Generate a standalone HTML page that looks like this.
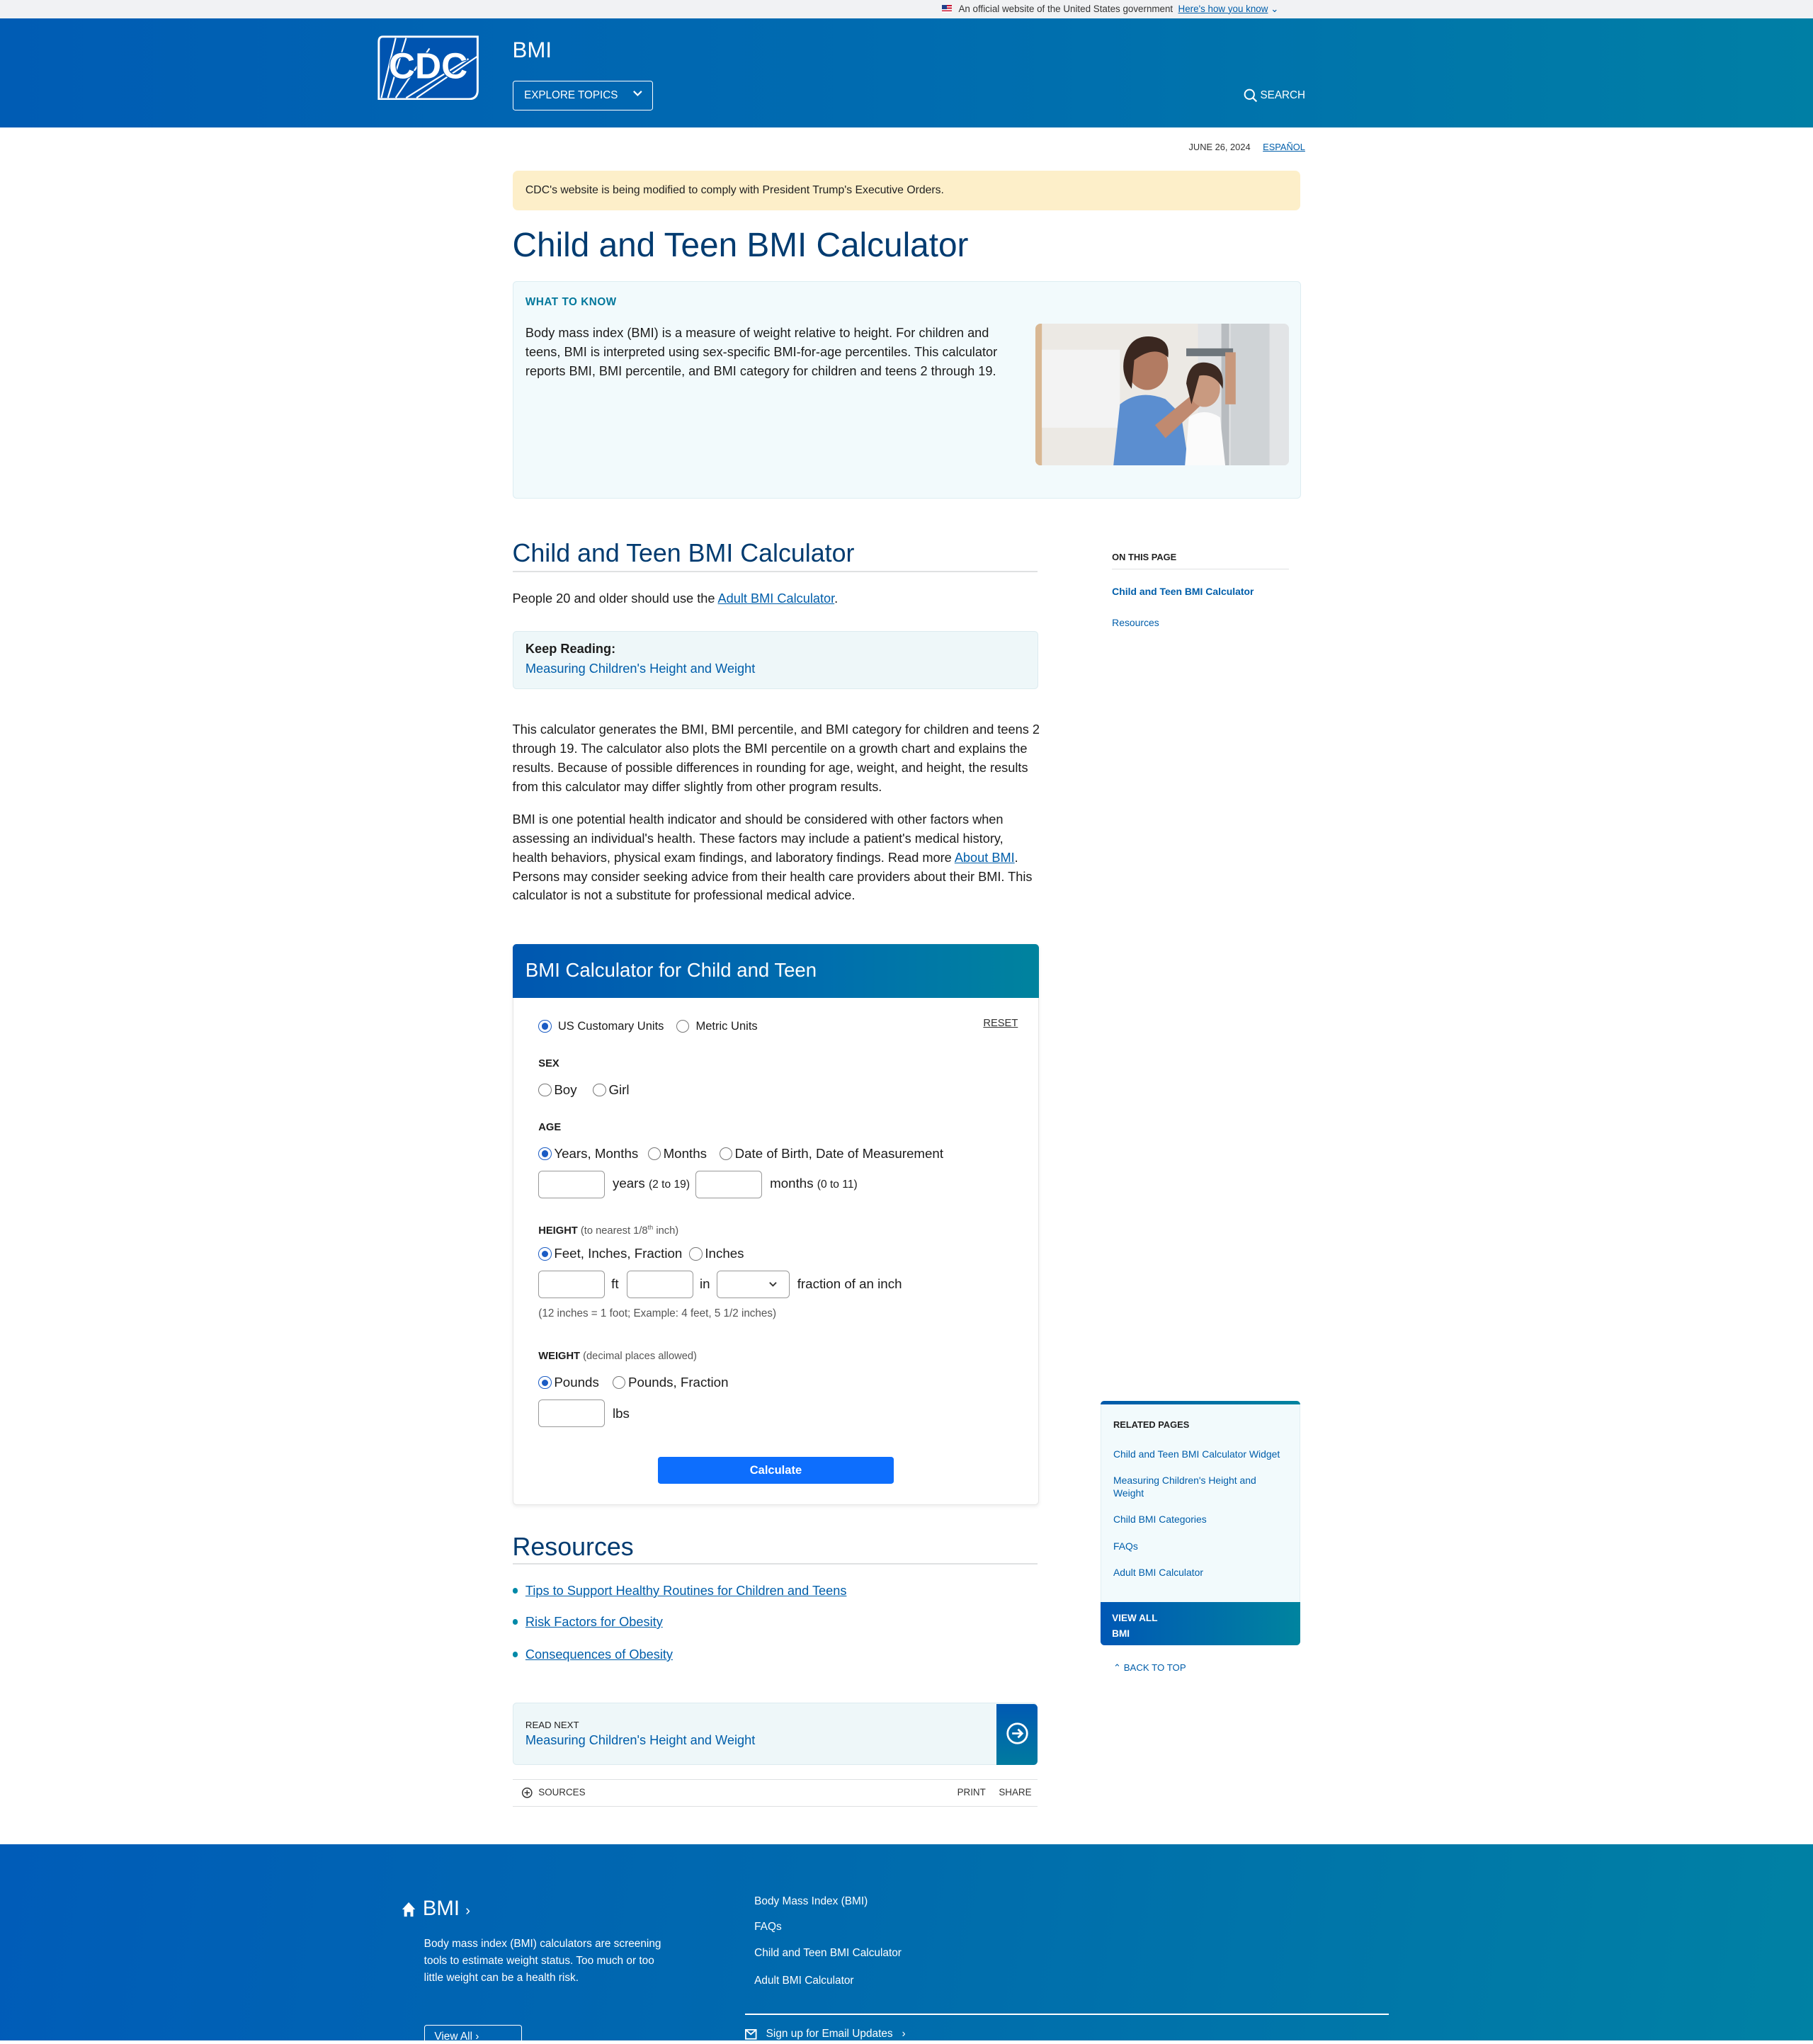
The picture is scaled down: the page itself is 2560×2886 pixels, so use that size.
<!DOCTYPE html>
<html><head><meta charset="utf-8">
<style>
html,body{margin:0;padding:0;background:#fff;}
body{width:1394px;height:1568px;zoom:1.83644;position:relative;overflow:hidden;font-family:"Liberation Sans",sans-serif;color:#1c1c1c;}
.a{position:absolute;}
.t{position:absolute;white-space:nowrap;}
a,.lk{color:#005eaa;}
.u{text-decoration:underline;}
.h{font-family:"Liberation Sans",sans-serif;color:#003b70;}
.radio{position:absolute;width:9px;height:9px;border:1px solid #777;border-radius:50%;background:#fff;}
.radio.on{border-color:#1b5cc4;}
.radio.on:after{content:"";position:absolute;left:2px;top:2px;width:5px;height:5px;border-radius:50%;background:#1b5cc4;}
.inp{position:absolute;border:1px solid #999;border-radius:3px;background:#fff;height:20px;}
.f11{font-size:10.2px;}
</style></head><body>

<!-- gov banner -->
<div class="a" style="left:0;top:0;width:1394px;height:14px;background:#f1f2f4;"></div>
<div class="a" style="left:724px;top:4px;width:8px;height:6px;background:repeating-linear-gradient(#c8102e 0 1px,#fff 1px 2px);"></div>
<div class="a" style="left:724px;top:4px;width:4px;height:3px;background:#1f3f8a;"></div>
<div class="t" style="left:737px;top:2px;font-size:7.3px;line-height:10px;color:#333;">An official website of the United States government <span class="lk u" style="margin-left:2px;">Here's how you know</span> <span class="lk">&#8964;</span></div>

<!-- header -->
<div class="a" style="left:0;top:14px;width:1394px;height:84px;background:linear-gradient(90deg,#005cb4 0%,#006cb0 50%,#007fa5 100%);"></div>
<svg class="a" style="left:290px;top:27px" width="80" height="50" viewBox="0 0 80 50">
<path d="M4 1 H77 V42 Q77 49 70 49 H1 V5 Q1 1 4 1Z" fill="#0054b0" stroke="#fff" stroke-width="1.6"/>
<path d="M3 48 L14 2 M8 48 L22 2 M14 48 L40 10 M22 48 L70 18 M30 48 L77 16" stroke="#fff" stroke-width="1.2" fill="none"/>
<text x="39" y="33" text-anchor="middle" font-family="Liberation Sans" font-weight="bold" font-size="28" fill="#fff" stroke="#0054b0" stroke-width="1.2" paint-order="stroke">CDC</text>
</svg>
<div class="t" style="left:394px;top:28px;font-size:17px;line-height:22px;color:#fff;">BMI</div>
<div class="a" style="left:394px;top:62px;width:107px;height:22px;border:1px solid #fff;border-radius:2px;"></div>
<div class="t" style="left:403px;top:68px;font-size:8.3px;line-height:11px;color:#fff;">EXPLORE TOPICS</div>
<svg class="a" style="left:486px;top:69px" width="8" height="6"><path d="M1 1 L4 4 L7 1" stroke="#fff" fill="none" stroke-width="1.2"/></svg>
<svg class="a" style="left:956px;top:68px" width="11" height="11"><circle cx="4.5" cy="4.5" r="3.6" stroke="#fff" fill="none" stroke-width="1.1"/><path d="M7.2 7.2 L10 10" stroke="#fff" stroke-width="1.2"/></svg>
<div class="t" style="left:969px;top:68px;font-size:8.3px;line-height:11px;color:#fff;">SEARCH</div>

<!-- date -->
<div class="t" style="left:914px;top:109px;font-size:7px;line-height:9px;color:#333;">JUNE 26, 2024</div>
<div class="t lk u" style="left:971px;top:109px;font-size:7px;line-height:9px;">ESPAÑOL</div>

<!-- alert -->
<div class="a" style="left:394px;top:131px;width:606px;height:31px;background:#fdefc9;border-radius:4px;"></div>
<div class="t" style="left:404px;top:141px;font-size:8.6px;line-height:11px;color:#222;">CDC's website is being modified to comply with President Trump's Executive Orders.</div>

<!-- h1 -->
<div class="t h" style="left:394px;top:172px;font-size:26px;line-height:34px;">Child and Teen BMI Calculator</div>

<!-- what to know -->
<div class="a" style="left:394px;top:216px;width:605px;height:166px;background:#f2fafc;border:1px solid #dcedf2;border-radius:3px;"></div>
<div class="t" style="left:404px;top:227px;font-size:8.3px;line-height:11px;color:#00779b;font-weight:bold;letter-spacing:.3px;">WHAT TO KNOW</div>
<div class="a" style="left:404px;top:249px;width:372px;font-size:9.9px;line-height:14.6px;color:#1c1c1c;">Body mass index (BMI) is a measure of weight relative to height. For children and teens, BMI is interpreted using sex-specific BMI-for-age percentiles. This calculator reports BMI, BMI percentile, and BMI category for children and teens 2 through 19.</div>
<svg class="a" style="left:796px;top:249px" width="195" height="109" viewBox="0 0 195 109">
<defs><clipPath id="c"><rect width="195" height="109" rx="4"/></clipPath></defs>
<g clip-path="url(#c)">
<rect width="195" height="109" fill="#ece9e4"/>
<rect x="0" y="0" width="5" height="109" fill="#d9b894"/>
<rect x="125" y="0" width="70" height="109" fill="#e2e4e6"/>
<rect x="150" y="0" width="30" height="109" fill="#cfd3d6"/>
<rect x="143" y="0" width="6" height="109" fill="#b8bcc0"/>
<rect x="5" y="20" width="60" height="60" fill="#f3f3f3"/>
<path d="M60 109 L65 62 Q80 50 100 58 L112 70 L118 109Z" fill="#5b8ed0"/>
<ellipse cx="86" cy="32" rx="16" ry="19" fill="#b27b62"/>
<path d="M68 28 Q72 8 90 10 Q104 12 102 26 Q92 16 76 28 L74 50 Q66 40 68 28Z" fill="#3a2720"/>
<path d="M92 78 L120 55 L128 62 L100 88Z" fill="#c08a70"/>
<rect x="116" y="19" width="36" height="6" fill="#6e767c"/>
<path d="M115 109 L118 72 Q130 64 142 72 L146 109Z" fill="#fbfbfb"/>
<ellipse cx="130" cy="50" rx="12" ry="14" fill="#c99a80"/>
<path d="M116 46 Q118 28 132 30 Q146 32 144 50 Q138 38 126 40 L120 62Z" fill="#3d2a22"/>
<rect x="146" y="22" width="8" height="40" fill="#c8987c"/>
</g></svg>

<!-- h2 -->
<div class="t h" style="left:394px;top:413px;font-size:19.5px;line-height:26px;">Child and Teen BMI Calculator</div>
<div class="a" style="left:394px;top:439px;width:404px;height:1px;background:#dfe1e2;"></div>
<div class="t" style="left:394px;top:454px;font-size:9.9px;line-height:13px;">People 20 and older should use the <span class="lk u">Adult BMI Calculator</span>.</div>

<div class="a" style="left:394px;top:485px;width:403px;height:44px;background:#eef7f9;border:1px solid #dcebef;border-radius:3px;"></div>
<div class="t" style="left:404px;top:493px;font-size:9.9px;line-height:13px;font-weight:bold;">Keep Reading:</div>
<div class="t lk" style="left:404px;top:508px;font-size:9.9px;line-height:13px;">Measuring Children's Height and Weight</div>

<div class="a" style="left:394px;top:554px;width:408px;font-size:9.9px;line-height:14.6px;">This calculator generates the BMI, BMI percentile, and BMI category for children and teens 2 through 19. The calculator also plots the BMI percentile on a growth chart and explains the results. Because of possible differences in rounding for age, weight, and height, the results from this calculator may differ slightly from other program results.</div>
<div class="a" style="left:394px;top:623px;width:406px;font-size:9.9px;line-height:14.6px;">BMI is one potential health indicator and should be considered with other factors when assessing an individual's health. These factors may include a patient's medical history, health behaviors, physical exam findings, and laboratory findings. Read more <span class="lk u">About BMI</span>. Persons may consider seeking advice from their health care providers about their BMI. This calculator is not a substitute for professional medical advice.</div>

<!-- calculator -->
<div class="a" style="left:394px;top:726px;width:404px;height:430px;border:1px solid #e6e6e6;border-radius:3px;box-shadow:0 1px 3px rgba(0,0,0,.08);"></div>
<div class="a" style="left:394px;top:726px;width:405px;height:41px;background:linear-gradient(90deg,#0057b0,#006fae 60%,#00839e);border-radius:3px 3px 0 0;"></div>
<div class="t" style="left:404px;top:736px;font-size:15px;line-height:20px;color:#fff;">BMI Calculator for Child and Teen</div>

<div class="radio on" style="left:414px;top:784px;"></div>
<div class="t f11" style="left:429px;top:783px;line-height:12px;font-size:9px;">US Customary Units</div>
<div class="radio" style="left:520px;top:784px;"></div>
<div class="t" style="left:535px;top:783px;line-height:12px;font-size:9px;">Metric Units</div>
<div class="t u" style="left:756px;top:782px;font-size:8px;line-height:10px;color:#333;">RESET</div>

<div class="t" style="left:414px;top:813px;font-size:8px;line-height:10px;font-weight:bold;">SEX</div>
<div class="radio" style="left:414px;top:833px;"></div><div class="t f11" style="left:426px;top:832px;line-height:12px;">Boy</div>
<div class="radio" style="left:456px;top:833px;"></div><div class="t f11" style="left:468px;top:832px;line-height:12px;">Girl</div>

<div class="t" style="left:414px;top:862px;font-size:8px;line-height:10px;font-weight:bold;">AGE</div>
<div class="radio on" style="left:414px;top:882px;"></div><div class="t f11" style="left:426px;top:881px;line-height:12px;">Years, Months</div>
<div class="radio" style="left:498px;top:882px;"></div><div class="t f11" style="left:510px;top:881px;line-height:12px;">Months</div>
<div class="radio" style="left:553px;top:882px;"></div><div class="t f11" style="left:565px;top:881px;line-height:12px;">Date of Birth, Date of Measurement</div>
<div class="inp" style="left:414px;top:900px;width:50px;"></div>
<div class="t f11" style="left:471px;top:904px;line-height:12px;">years <span style="font-size:8.5px">(2 to 19)</span></div>
<div class="inp" style="left:535px;top:900px;width:50px;"></div>
<div class="t f11" style="left:592px;top:904px;line-height:12px;">months <span style="font-size:8.5px">(0 to 11)</span></div>

<div class="t" style="left:414px;top:939px;font-size:8px;line-height:10px;"><b>HEIGHT</b> <span style="color:#555">(to nearest 1/8<sup style="font-size:5px">th</sup> inch)</span></div>
<div class="radio on" style="left:414px;top:959px;"></div><div class="t f11" style="left:426px;top:958px;line-height:12px;">Feet, Inches, Fraction</div>
<div class="radio" style="left:530px;top:959px;"></div><div class="t f11" style="left:542px;top:958px;line-height:12px;">Inches</div>
<div class="inp" style="left:414px;top:977px;width:50px;"></div>
<div class="t f11" style="left:470px;top:981px;line-height:12px;">ft</div>
<div class="inp" style="left:482px;top:977px;width:50px;"></div>
<div class="t f11" style="left:538px;top:981px;line-height:12px;">in</div>
<div class="inp" style="left:551px;top:977px;width:55px;"></div>
<svg class="a" style="left:591px;top:985px" width="7" height="5"><path d="M1 1 L3.5 3.5 L6 1" stroke="#333" fill="none" stroke-width="1"/></svg>
<div class="t f11" style="left:613px;top:981px;line-height:12px;">fraction of an inch</div>
<div class="t" style="left:414px;top:1005px;font-size:8.3px;line-height:10px;color:#555;">(12 inches = 1 foot; Example: 4 feet, 5 1/2 inches)</div>

<div class="t" style="left:414px;top:1038px;font-size:8px;line-height:10px;"><b>WEIGHT</b> <span style="color:#555">(decimal places allowed)</span></div>
<div class="radio on" style="left:414px;top:1058px;"></div><div class="t f11" style="left:426px;top:1057px;line-height:12px;">Pounds</div>
<div class="radio" style="left:471px;top:1058px;"></div><div class="t f11" style="left:483px;top:1057px;line-height:12px;">Pounds, Fraction</div>
<div class="inp" style="left:414px;top:1076px;width:50px;"></div>
<div class="t f11" style="left:471px;top:1081px;line-height:12px;">lbs</div>
<div class="a" style="left:506px;top:1120px;width:181px;height:21px;background:#0d6efd;border-radius:2px;"></div>
<div class="t" style="left:506px;top:1125px;width:181px;text-align:center;font-size:9px;line-height:11px;color:#fff;font-weight:bold;">Calculate</div>

<!-- resources -->
<div class="t h" style="left:394px;top:1177px;font-size:19.5px;line-height:26px;">Resources</div>
<div class="a" style="left:394px;top:1202px;width:404px;height:1px;background:#dfe1e2;"></div>
<div class="a" style="left:394px;top:1221px;width:4px;height:4px;border-radius:50%;background:#0089a8;"></div>
<div class="t lk u" style="left:404px;top:1217px;font-size:9.9px;line-height:13px;">Tips to Support Healthy Routines for Children and Teens</div>
<div class="a" style="left:394px;top:1245px;width:4px;height:4px;border-radius:50%;background:#0089a8;"></div>
<div class="t lk u" style="left:404px;top:1241px;font-size:9.9px;line-height:13px;">Risk Factors for Obesity</div>
<div class="a" style="left:394px;top:1270px;width:4px;height:4px;border-radius:50%;background:#0089a8;"></div>
<div class="t lk u" style="left:404px;top:1266px;font-size:9.9px;line-height:13px;">Consequences of Obesity</div>

<!-- read next -->
<div class="a" style="left:394px;top:1309px;width:402px;height:47px;background:#eef7f9;border:1px solid #dcebef;border-radius:3px;"></div>
<div class="a" style="left:766px;top:1310px;width:32px;height:47px;background:linear-gradient(#0059b3,#007b9f);border-radius:0 3px 3px 0;"></div>
<svg class="a" style="left:773px;top:1324px" width="18" height="18"><circle cx="9" cy="9" r="7.5" stroke="#fff" stroke-width="1.5" fill="none"/><path d="M5 9 H12.5 M9.5 5.8 L12.7 9 L9.5 12.2" stroke="#fff" stroke-width="1.5" fill="none"/></svg>
<div class="t" style="left:404px;top:1322px;font-size:7.2px;line-height:9px;color:#222;">READ NEXT</div>
<div class="t lk" style="left:404px;top:1332px;font-size:9.9px;line-height:13px;">Measuring Children's Height and Weight</div>

<div class="a" style="left:394px;top:1368px;width:404px;height:20px;border-top:1px solid #dfe1e2;border-bottom:1px solid #dfe1e2;"></div>
<svg class="a" style="left:401px;top:1374px" width="9" height="9"><circle cx="4.5" cy="4.5" r="3.6" stroke="#333" fill="none" stroke-width=".8"/><path d="M4.5 2.5 V6.5 M2.5 4.5 H6.5" stroke="#333" stroke-width=".8"/></svg>
<div class="t" style="left:414px;top:1374px;font-size:7.3px;line-height:9px;color:#333;">SOURCES</div>
<div class="t" style="left:736px;top:1374px;font-size:7.3px;line-height:9px;color:#333;">PRINT</div>
<div class="t" style="left:768px;top:1374px;font-size:7.3px;line-height:9px;color:#333;">SHARE</div>

<!-- sidebar -->
<div class="t" style="left:855px;top:424px;font-size:7px;line-height:9px;color:#222;font-weight:bold;">ON THIS PAGE</div>
<div class="a" style="left:855px;top:437px;width:136px;height:1px;background:#dfe1e2;"></div>
<div class="t lk" style="left:855px;top:450px;font-size:7.6px;line-height:10px;font-weight:bold;">Child and Teen BMI Calculator</div>
<div class="t lk" style="left:855px;top:474px;font-size:7.6px;line-height:10px;">Resources</div>

<div class="a" style="left:846px;top:1077px;width:154px;height:188px;background:#f2fafc;border:1px solid #e0eef2;border-radius:3px;box-sizing:border-box;"></div>
<div class="a" style="left:846px;top:1077px;width:154px;height:3px;background:linear-gradient(90deg,#0059aa,#00849f);border-radius:3px 3px 0 0;"></div>
<div class="t" style="left:856px;top:1091px;font-size:7px;line-height:9px;color:#222;font-weight:bold;">RELATED PAGES</div>
<div class="t lk" style="left:856px;top:1113px;font-size:7.6px;line-height:10px;">Child and Teen BMI Calculator Widget</div>
<div class="a lk" style="left:856px;top:1133px;width:130px;font-size:7.6px;line-height:10px;">Measuring Children's Height and Weight</div>
<div class="t lk" style="left:856px;top:1163px;font-size:7.6px;line-height:10px;">Child BMI Categories</div>
<div class="t lk" style="left:856px;top:1184px;font-size:7.6px;line-height:10px;">FAQs</div>
<div class="t lk" style="left:856px;top:1204px;font-size:7.6px;line-height:10px;">Adult BMI Calculator</div>
<div class="a" style="left:846px;top:1232px;width:154px;height:33px;background:linear-gradient(90deg,#0057b5,#00849f);border-radius:0 0 3px 3px;"></div>
<div class="a" style="left:855px;top:1238px;font-size:7.4px;line-height:12px;color:#fff;font-weight:bold;">VIEW ALL<br>BMI</div>
<div class="t lk" style="left:856px;top:1278px;font-size:7.2px;line-height:9px;">&#8963; BACK TO TOP</div>

<!-- footer -->
<div class="a" style="left:0;top:1418px;width:1394px;height:151px;background:linear-gradient(100deg,#005cb8 0%,#006aae 45%,#0081a4 100%);"></div>
<svg class="a" style="left:309px;top:1462px" width="11" height="12"><path d="M5.5 0.5 L10.5 6 H9 V11.5 H6.8 V8 H4.2 V11.5 H2 V6 H0.5Z" fill="#fff"/></svg>
<div class="t" style="left:325px;top:1457px;font-size:16px;line-height:21px;color:#fff;">BMI <span style="font-size:11px;">&#8250;</span></div>
<div class="a" style="left:326px;top:1488px;width:184px;font-size:8.4px;line-height:13.2px;color:#fff;">Body mass index (BMI) calculators are screening tools to estimate weight status. Too much or too little weight can be a health risk.</div>
<div class="a" style="left:326px;top:1557px;width:74px;height:14px;border:1px solid #fff;border-bottom:none;border-radius:2px 2px 0 0;"></div>
<div class="t" style="left:334px;top:1561px;font-size:8.4px;line-height:10px;color:#fff;">View All &#8250;</div>
<div class="t" style="left:580px;top:1457px;font-size:8.4px;line-height:10px;color:#fff;">Body Mass Index (BMI)</div>
<div class="t" style="left:580px;top:1477px;font-size:8.4px;line-height:10px;color:#fff;">FAQs</div>
<div class="t" style="left:580px;top:1497px;font-size:8.4px;line-height:10px;color:#fff;">Child and Teen BMI Calculator</div>
<div class="t" style="left:580px;top:1518px;font-size:8.4px;line-height:10px;color:#fff;">Adult BMI Calculator</div>
<div class="a" style="left:573px;top:1548px;width:495px;height:1px;background:#fff;"></div>
<svg class="a" style="left:573px;top:1560px" width="9" height="8"><rect x=".5" y=".5" width="8" height="7" stroke="#fff" fill="none"/><path d="M.5 .5 L4.5 4 L8.5 .5" stroke="#fff" fill="none"/></svg>
<div class="t" style="left:589px;top:1559px;font-size:8.4px;line-height:10px;color:#fff;">Sign up for Email Updates &nbsp; &#8250;</div>
</body></html>
